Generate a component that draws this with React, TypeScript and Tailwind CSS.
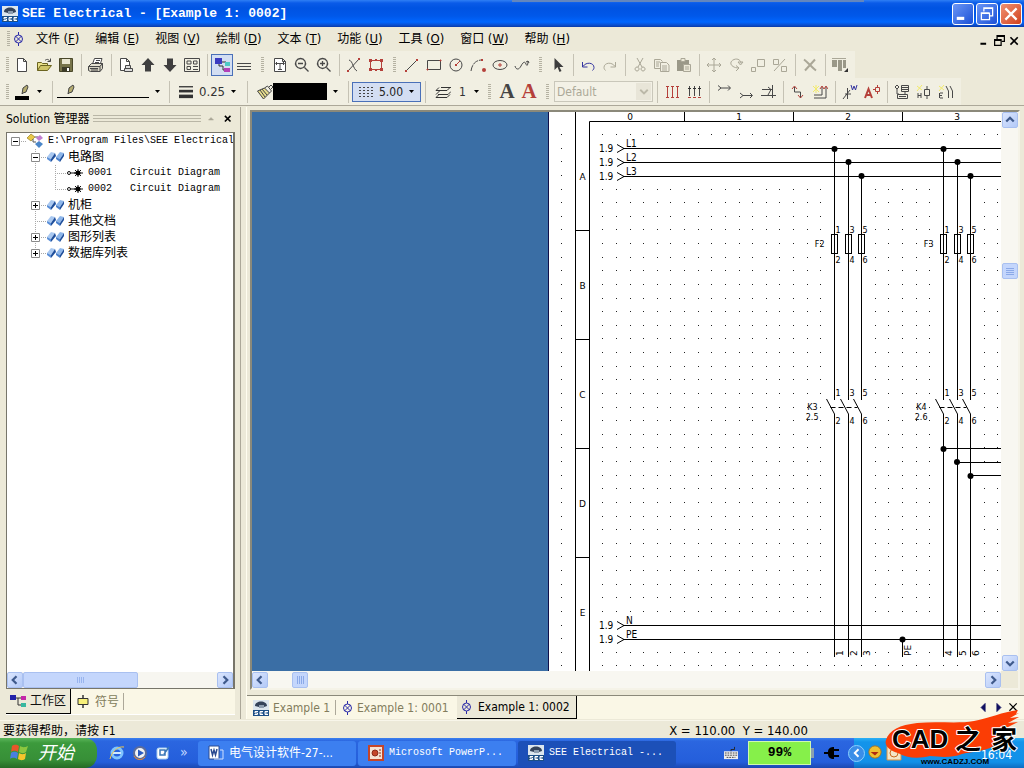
import { useState, type ReactNode } from "react";

const UI = "font-['DejaVu_Sans_Condensed','DejaVu_Sans','Noto_Sans_CJK_SC',sans-serif]";
const MONO = "font-['Liberation_Mono','Noto_Sans_CJK_SC',monospace]";

function Icon({ children, size = 16 }: { children: ReactNode; size?: number }) {
  return (
    <svg width={size} height={size} viewBox="0 0 16 16" fill="none" stroke="currentColor" aria-hidden="true" className="shrink-0">
      {children}
    </svg>
  );
}

const red = "#b5403a";
const yellow = "#f2ea6a";

const icons: Record<string, ReactNode> = {
  New: <path d="M3.5 1.5h6l3 3v10h-9z M9.5 1.5v3h3" fill="#fff" />,
  Open: (
    <>
      <path d="M1.5 13.5v-8h4l1 1h5v2" fill="#e8e08a" stroke="#6b6420" />
      <path d="M1.5 13.5l3-5h11l-4 5z" fill="#cfc568" stroke="#6b6420" />
      <path d="M9 3.5c2-2 4-1 5 1M14.5 1.5v3h-3" />
    </>
  ),
  Save: (
    <>
      <path d="M1.5 1.5h13v13h-13z" fill="#77744a" stroke="#4a482a" />
      <path d="M4 2h8v5H4z" fill="#e9e6d0" stroke="none" />
      <path d="M4 10h8v5H4z" fill="#3d3c28" stroke="none" />
      <path d="M9 11h2v3H9z" fill="#fff" stroke="none" />
    </>
  ),
  Print: (
    <>
      <path d="M4.5 7l2-5.500h7.500l-1.500 5z" fill="#fff" />
      <path d="M8 3.500h4M7 5.500h4" />
      <path d="M.5 9.500l3-3h11l-2.500 3z" fill="#e3e0d0" />
      <path d="M.5 9.500H12v5H2.500l-2-1z M12 9.500l2.500-3v5l-2.500 3" fill="#d6d3c2" />
      <path d="M2 11.500h8M3 13h7" />
    </>
  ),
  "Page setup": (
    <>
      <path d="M6 13.5H2.500v-12h6l3 3v4 M8.500 1.500v3h3" fill="#fff" />
      <path d="M7.500 8.500h5v3h-5z M6.500 11.500h8v3h-8z" fill="#ddd" />
    </>
  ),
  "Previous page": <path d="M8 1L1.500 8H5v6.500h6V8h3.500z" fill="#3f3f3f" stroke="none" />,
  "Next page": <path d="M8 15L1.500 8H5V1.500h6V8h3.500z" fill="#3f3f3f" stroke="none" />,
  "Page list": <path d="M.5 1.500h15v13H.5z M3 4h4v3H3z M9.500 4h3.500v3H9.500z M3 9.500h3.500v3H3z M9 9.500h5 M9 12.500h5" />,
  Workspace: (
    <>
      <path d="M1 1h7v6H1z" fill="#3a3ac0" stroke="none" />
      <path d="M5 7v2h4v4h2M8 5h4" stroke="#333" />
      <path d="M11 5h5v4h-5z" fill="#4cc9c4" stroke="none" />
      <path d="M10 11h6v4h-6z" fill="#b340b8" stroke="none" />
    </>
  ),
  Lines: <path d="M1 6.500h14 M1 9.500h14 M1 12.500h14" />,
  "Fit page": (
    <>
      <path d="M2.500 1.500h8l3 3v10h-11z M10.500 1.500v3h3" fill="#fff" />
      <path d="M4 6.500h8 M8 6.500v6 M5 5l-1.500 1.500L5 8M11 5l1.500 1.500L11 8 M6 12.500h4" />
    </>
  ),
  "Zoom out": <path d="M6.500 1.500a5 5 0 1 0 .1 0z M4 6.500h5 M10.500 10.500l4 4" strokeWidth="1.300" />,
  "Zoom in": <path d="M6.500 1.500a5 5 0 1 0 .1 0z M4 6.500h5 M6.500 4v5 M10.500 10.500l4 4" strokeWidth="1.300" />,
  "Snap line": (
    <>
      <path d="M2 14L13 2 M3 3c4 1 4 9 8 11" />
      <path d="M12 1h2v2h-2z M1 13h2v2H1z" fill={red} stroke="none" />
    </>
  ),
  Select: (
    <>
      <path d="M2.500 3.500h11v9h-11z" stroke={red} />
      <path d="M1 2h3v3H1z M12 2h3v3h-3z M1 11h3v3H1z M12 11h3v3h-3z M7 2h2v2H7z M7 12h2v2H7z" fill={red} stroke="none" />
    </>
  ),
  Line: (
    <>
      <path d="M2 14L13 3" />
      <path d="M12 2h2v2h-2z M1 13h2v2H1z" fill={red} stroke="none" />
    </>
  ),
  Rectangle: (
    <>
      <path d="M1.500 3.500h13v9h-13z" />
      <path d="M14 3h1v1h-1z M1 12h1v1H1z" fill={red} stroke={red} />
    </>
  ),
  Circle: (
    <>
      <circle cx="8" cy="8" r="6" />
      <path d="M8 8l4-4" stroke={red} />
      <path d="M7 7h2v2H7z" fill={red} stroke="none" />
    </>
  ),
  Arc: (
    <>
      <path d="M1 14C2 7 6 3 12 3" strokeDasharray="6 1" />
      <path d="M11 2h2v2h-2z" fill={red} stroke="none" />
      <circle cx="14" cy="13" r="2" fill={red} stroke="none" />
    </>
  ),
  Ellipse: (
    <>
      <ellipse cx="8" cy="8" rx="7" ry="4.500" />
      <path d="M8 6v4M6 8h4" stroke={red} />
    </>
  ),
  Spline: <path d="M1 9c1 4 4 4 6 0s4-5 5-2 2 1 2-3 M12 5l2-1 1 2" />,
  Pointer: <path d="M4.500 1v12l3-3 2 5 2-1-2-4h4z" fill="#3d3d3d" stroke="none" />,
  Undo: <path d="M2.500 5v5h5 M3 9.500c3-5 11-4 11 1 0 1-.5 2-1.500 3" stroke="#3434a0" />,
  Redo: <path d="M13.500 5v5h-5 M13 9.500c-3-5-11-4-11 1 0 1 .5 2 1.500 3" stroke="#aca998" />,
  Cut: <path d="M5 1l5 9 M11 1L6 10 M5 10a2 2 0 1 0 .1 0z M11 10a2 2 0 1 0 .1 0z" />,
  Copy: <path d="M6 11.500H.5v-9h6l2 2 M2 5h4 M2 7h3 M2 9h3 M6.500 5.500h6l2.500 2.500v6.500H6.500z M8 9h5 M8 11h5 M8 13h5" />,
  Paste: (
    <>
      <path d="M1 3h12v11H1z" fill="#9a9888" stroke="none" />
      <path d="M5 1.500h4v3H5z M7.500 7.500h7v7h-7z M9 10h4 M9 12h4" fill="#ece9d8" />
    </>
  ),
  Move: <path d="M8 1v14 M1 8h14 M6 3l2-2 2 2 M6 13l2 2 2-2 M3 6L1 8l2 2 M13 6l2 2-2 2" />,
  Rotate: <path d="M11 11C3 11 0 5 6 2.500c4-1.500 7 1 7 4M10 5h5l-2.500 3z M11 11L8 8.500M11 11l-3 3" />,
  Scale: <path d="M7.500 2.500h7v7h-7z M1.500 10.500h4v4h-4z" />,
  Mirror: <path d="M1.500 2.500h5v5h-5z M9.500 9.500h5v5h-5z M13 2L2 14" />,
  Delete: <path d="M2 2.500c4 3 8 8 12 11 M13 2.500L3 13.500" strokeWidth="2" />,
  Align: (
    <>
      <path d="M0 1.500h14" />
      <path d="M0 3h5v7H0z M6 3h4v11H6z M11 3h3v8h-3z" fill="#9a9888" stroke="none" />
      <path d="M16 11v4h-4z" fill="#333" stroke="none" />
    </>
  ),
  Potential: (
    <>
      <path d="M3.500 3v10 M8.500 3v10 M13.500 3v10" stroke={red} />
      <path d="M2 2.500h3M7 2.500h3M12 2.500h3M2 13.500h3M7 13.500h3M12 13.500h3" stroke={red} />
    </>
  ),
  "Potential multi": (
    <>
      <path d="M3.500 2v10 M8.500 2v10 M13.500 2v10" />
      <path d="M2 4.500h3M7 4.500h3M12 4.500h3" stroke="#333" />
      <path d="M2 13.500h3M7 13.500h3M12 13.500h3" stroke={red} />
    </>
  ),
  "Upper potential": <path d="M2 1.500l3 2.500-3 2.500 M5 4h9 M12 1.500L14.500 4 12 6.500" />,
  "Lower potential": <path d="M2 9l3 2.500L2 14 M5 11.500h9 M12 9l2.500 2.500L12 14" />,
  "Insert potential": <path d="M1 11.500h15 M2 5.500h10 M12.500 1v13 M8 3l3 2.500L8 11" />,
  Connection: (
    <>
      <path d="M4.500 3v5h6v6" />
      <path d="M2 5l2.500-3L7 5M8 11l2.500 3 2.500-3" stroke={red} />
    </>
  ),
  "Auto connection": (
    <>
      <path d="M1 2l6 6M7 2L1 8M4 1v8" stroke={yellow} />
      <path d="M2 11h8V3 M2 14h12V3" />
      <path d="M8 5l2-3 2 3M12 5l2-3 2 3" stroke={red} />
    </>
  ),
  "Wire number": (
    <>
      <path d="M1 15L8 6 M5.500 4v11 M3 10h6" />
      <path d="M9 1l1.500 5L12 2l1.500 4L15 1" stroke="#3434a0" />
    </>
  ),
  "Component text": (
    <>
      <path d="M1 14L4.500 5 8 14 M2.500 11h4" stroke={red} strokeWidth="2" />
      <path d="M9 5.500h2 M11.500 3.500h4v4h-4z M13.500 1v2 M13.500 8v2" stroke={red} />
    </>
  ),
  Catalogue: <path d="M3 1l2 2-2 2-2-2z M3 5v5h2 M7.500 1.500h7v6h-7z M8 3.500h6M8 5.500h6 M3.500 10.500h10v4h-10z M5 12.500h7 M11 8v2" />,
  "Coil search": (
    <>
      <path d="M1 2l5 4M6 1L1 7" stroke={yellow} />
      <path d="M8.500 5.500h5v6h-5z M11 2v3 M11 12v3 M2 9v5 M5 9v5 M2 11.500h3" />
    </>
  ),
  "Contact search": (
    <>
      <path d="M1 2l5 4M6 1L1 7" stroke={yellow} />
      <path d="M8 2l2.500 5v7 M12 2l2.500 5v7 M1.500 9v5 M2 9h3M2 14h3M2 11.500h2" />
    </>
  ),
};

const toolbarGroups: { names: string[]; grip?: boolean; dim?: boolean; plain?: boolean }[] = [
  { names: ["New", "Open", "Save"], plain: true },
  { names: ["Print"] },
  { names: ["Page setup", "Previous page", "Next page", "Page list"] },
  { names: ["Workspace", "Lines"] },
  { names: ["Fit page", "Zoom out", "Zoom in"], grip: true },
  { names: ["Snap line", "Select"] },
  { names: ["Line", "Rectangle", "Circle", "Arc", "Ellipse", "Spline"], grip: true },
  { names: ["Pointer"], grip: true },
  { names: ["Undo", "Redo"] },
  { names: ["Cut", "Copy", "Paste"], dim: true },
  { names: ["Move", "Rotate", "Scale", "Mirror"], dim: true },
  { names: ["Delete"], dim: true },
  { names: ["Align"], dim: true },
];

const wireGroups = [
  ["Potential", "Potential multi"],
  ["Upper potential", "Lower potential", "Insert potential"],
  ["Connection", "Auto connection"],
  ["Wire number", "Component text"],
  ["Catalogue", "Coil search", "Contact search"],
];

function Grip() {
  return (
    <span className="w-3.5 h-4 shrink-0 flex justify-center">
      <span className="w-[3px] h-full bg-[repeating-linear-gradient(#b5b2a2_0_1px,transparent_1px_2px)]" />
    </span>
  );
}

function Sep() {
  return (
    <span className="w-2 h-[22px] shrink-0 flex justify-center">
      <span className="w-px bg-[#c5c2b4]" />
    </span>
  );
}

function ToolButton({ name, dim }: { name: string; dim?: boolean }) {
  const color = dim ? "text-[#aaa797]" : "text-[#484848]";
  const box = name === "Workspace" ? "border border-[#4a70b8] bg-[#d3def2]" : "";
  return (
    <button aria-label={name} className={`w-[22px] h-[22px] shrink-0 flex items-center justify-center ${color} ${box}`}>
      <Icon>{icons[name]}</Icon>
    </button>
  );
}

function Caret() {
  return (
    <svg width="5" height="3" viewBox="0 0 5 3" className="shrink-0" aria-hidden="true">
      <path d="M0 0h5L2.500 3z" />
    </svg>
  );
}

// SEE program logo
function SeeIcon({ size = 16 }: { size?: number }) {
  return (
    <svg width={size} height={size} viewBox="0 0 16 16" aria-hidden="true" className="shrink-0">
      <path d="M0 0h16v16H0z" fill="#dce6ee" />
      <path d="M2 6c0-6 12-6 12 0l-3 1-2-2-3 2z" fill="#34435a" />
      <path d="M6 5h5v3H6z" fill="#8e9eb0" />
      <path d="M0 10h16v6H0z" fill="#1c4f86" />
      <path d="M5 11.500H2v1.500h2.500v1.500H1.500 M10 11.500H7v3h3M7 13h2.500 M15 11.500h-3v3h3M12 13h2.500" fill="none" stroke="#fff" />
    </svg>
  );
}

function SheetIcon() {
  return (
    <svg width="11" height="14" viewBox="0 0 11 14" fill="none" stroke="#2a2aa8" aria-hidden="true" className="shrink-0">
      <circle cx="5.500" cy="7" r="4" />
      <path d="M5.500 0v3 M5.500 11v3 M2.500 4l6 6 M8.500 4l-6 6" />
    </svg>
  );
}

const menus = [
  ["文件", "F"], ["编辑", "E"], ["视图", "V"], ["绘制", "D"], ["文本", "T"],
  ["功能", "U"], ["工具", "O"], ["窗口", "W"], ["帮助", "H"],
];

function TitleBar() {
  return (
    <header className="relative h-[27px] shrink-0 flex items-center pl-0.5 pr-0.5 bg-[linear-gradient(#2f7ff5_0px,#0a5be8_3px,#0053e2_8px,#0058ea_16px,#0066ff_22px,#0a4fd0_25px,#0a3aa8_27px)]">
      <span className="absolute top-0 left-1/2 w-[352px] h-0.5 bg-[#6486bd]" />
      <SeeIcon />
      <h1 className={`ml-1 flex-1 text-[13px] font-bold text-white whitespace-pre ${MONO}`}>SEE Electrical - [Example 1: 0002]</h1>
      <div className="flex gap-0.5">
        <button aria-label="Minimize" className="size-[22px] rounded-[3px] border border-white bg-linear-to-br from-[#6b95f5] to-[#1a4fd6]">
          <Icon size={20}><path d="M3 11.500h6" stroke="#fff" strokeWidth="2.500" /></Icon>
        </button>
        <button aria-label="Restore" className="size-[22px] rounded-[3px] border border-white bg-linear-to-br from-[#6b95f5] to-[#1a4fd6]">
          <Icon size={20}><path d="M5.500 6V3.500h7v6H10 M3 7.500h7v5H3.500v-5 M5 3h8 M3 7h7" stroke="#fff" /></Icon>
        </button>
        <button aria-label="Close" className="size-[22px] rounded-[3px] border border-white bg-linear-to-br from-[#f09070] to-[#d0401a]">
          <Icon size={20}><path d="M3.500 3.500l9 9 M12.500 3.500l-9 9" stroke="#fff" strokeWidth="1.800" /></Icon>
        </button>
      </div>
    </header>
  );
}

function MenuBar() {
  return (
    <nav className="h-6 shrink-0 flex items-center pl-px pr-[3px] text-black">
      <Grip />
      <span className="-ml-0.5 mr-3"><SheetIcon /></span>
      <div className="flex gap-4 flex-1">
        {menus.map(([label, key]) => (
          <button key={key} className="whitespace-nowrap">
            {label} <span className="text-[13px]">(<u>{key}</u>)</span>
          </button>
        ))}
      </div>
      <div className="flex items-center gap-0.5 pt-0.5">
        <button aria-label="Minimize document"><Icon size={13}><path d="M3 12h7" strokeWidth="2.500" /></Icon></button>
        <button aria-label="Restore document"><Icon size={13}><path d="M5 6V2h9v7h-3 M5 3h9 M2 7h8v7H2z M2 8h8" strokeWidth="1.500" /></Icon></button>
        <button aria-label="Close document"><Icon size={13}><path d="M3 4l9 9 M12 4l-9 9" strokeWidth="2" /></Icon></button>
      </div>
    </nav>
  );
}

function Toolbars() {
  return (
    <>
      <div className="h-[27px] shrink-0 flex items-center">
        <div className="flex items-center bg-[#f1efe2] pr-1 h-full">
          <span className="-mr-[3px] flex"><Grip /></span>
          {toolbarGroups.map((g) => (
            <div key={g.names[0]} className="flex items-center">
              {g.plain ? null : g.grip ? <Grip /> : <Sep />}
              {g.names.map((n) => <ToolButton key={n} name={n} dim={g.dim} />)}
            </div>
          ))}
        </div>
      </div>
      <div className="h-[27px] shrink-0 flex items-center">
        <div className="flex items-center bg-[#f1efe2] pr-1 h-full">
          <span className="-mr-[3px] flex"><Grip /></span>
          <button aria-label="Pen colour" className="w-[37px] flex items-center gap-2 pl-1">
            <svg width="14" height="16" viewBox="0 0 14 16" aria-hidden="true">
              <path d="M7 10L8 4l4-3 1 2-2 5-3 1z" fill="#b5ac70" stroke="#444" />
              <path d="M0 12h14v4H0z" />
            </svg>
            <Caret />
          </button>
          <Sep />
          <button aria-label="Line style" className="w-[109px] flex items-center gap-1.5 pl-px">
            <svg width="92" height="16" viewBox="0 0 92 16" aria-hidden="true">
              <path d="M11 10L12 4l4-3 1 2-2 5-3 1z" fill="#b5ac70" stroke="#444" />
              <path d="M0 13.500h92" stroke="#000" />
            </svg>
            <Caret />
          </button>
          <Sep />
          <button className="w-[70px] flex items-center gap-1.5 pl-1.5 text-[13px] text-[#333]">
            <Icon size={14}><path d="M0 2h16" strokeWidth="1.500" /><path d="M0 7h16" strokeWidth="3" /><path d="M0 13h16" strokeWidth="4" /></Icon>
            0.25
            <Caret />
          </button>
          <Sep />
          <button aria-label="Fill" className="w-[93px] flex items-center gap-1.5 pl-1.5 text-[#444]">
            <span className="flex items-center">
              <Icon>
                <path d="M.5 7l7-3 5 5-6 6z" fill="#e6dc8c" />
                <path d="M3 6l5 7M5 5l5 6M7.500 4l3-2 4 5-2 2M12 3l2-2 2 2-2 2" />
              </Icon>
              <span className="w-[54px] h-[17px] bg-black" />
            </span>
            <Caret />
          </button>
          <Sep />
          <button className="w-[69px] h-5 flex items-center gap-1.5 pl-1.5 border border-[#4a70b8] bg-[#d3def2] text-[#222]">
            <svg width="14" height="12" viewBox="0 0 14 12" aria-hidden="true" className="shrink-0">
              <path d="M0 1.500h14M0 4.500h14M0 7.500h14M0 10.500h14" stroke="#444" strokeDasharray="2 2" />
            </svg>
            5.00
            <Caret />
          </button>
          <Sep />
          <button className="w-[53px] flex items-center gap-2 pl-1.5 text-[#333]">
            <Icon><path d="M6 3.500h10M1 6.500h11l3-3M1 6.500l3-3M3 10.500h10l3-3M1 10.500l4-4M1 13.500h11l3-3M1 13.500l3-3" /></Icon>
            1
            <Caret />
          </button>
          <Grip />
          <button aria-label="Text" className="w-[22px] text-[21px] leading-none font-bold text-[#444] font-['Liberation_Serif',serif]">A</button>
          <button aria-label="Text attributes" className="w-[22px] text-[21px] leading-none font-bold text-[#b5403a] font-['Liberation_Serif',serif]">A</button>
          <Grip />
          <span className="relative flex">
            <select disabled aria-label="Style" className="w-[99px] h-[21px] pl-0.5 appearance-none border border-[#c9c7ba] text-[#aca998] bg-[#f3f1e6]">
              <option>Default</option>
            </select>
            <span className="pointer-events-none absolute right-0.5 top-0.5 w-[15px] h-[17px] flex items-center justify-center bg-[#e8e5d8] text-[#bbb8a8]">
              <Icon size={12}><path d="M3 5l5 5 5-5" strokeWidth="2.500" /></Icon>
            </span>
          </span>
          {wireGroups.map((g) => (
            <div key={g[0]} className="flex items-center">
              <Sep />
              {g.map((n) => <ToolButton key={n} name={n} />)}
            </div>
          ))}
        </div>
      </div>
    </>
  );
}

/* ---------- side panel ---------- */

function Guide({ box, up, down, right }: { box?: "+" | "-"; up?: boolean; down?: boolean; right?: boolean }) {
  return (
    <svg width="20" height="16" viewBox="0 0 20 16" fill="none" className="shrink-0" aria-hidden="true">
      <g stroke="#a8a8a8" strokeDasharray="1 1">
        {up && <path d="M8.500 0v8" />}
        {down && <path d="M8.500 8v8" />}
        {right && <path d="M8 8.500h12" />}
      </g>
      {box && <path d="M4.500 4.500h8v8h-8z" fill="#fff" stroke="#8a8a8a" />}
      {box && <path d="M6 8.500h5" stroke="#000" />}
      {box === "+" && <path d="M8.500 6v5" stroke="#000" />}
    </svg>
  );
}

function FolderIcon() {
  return (
    <svg width="17" height="12" viewBox="0 0 17 12" className="shrink-0" aria-hidden="true">
      <path d="M0 6l4-5 4 1-4 6z" fill="#a9c8f0" />
      <path d="M0 6l4 2v3L0 8z" fill="#5a8fd8" />
      <path d="M4 8l4-6 1 3-5 6z" fill="#1f4f9c" />
      <path d="M9 6l4-5 4 1-4 6z" fill="#8db6ea" />
      <path d="M9 6l4 2v3L9 8z" fill="#4a80cc" />
      <path d="M13 8l4-6v3l-4 6z" fill="#1f4f9c" />
    </svg>
  );
}

const folders = [
  { label: "机柜", box: "+" as const },
  { label: "其他文档" },
  { label: "图形列表", box: "+" as const },
  { label: "数据库列表", box: "+" as const },
];

function Tree() {
  return (
    <ul className="flex-1 overflow-hidden text-black">
      <li className="flex items-center h-4">
        <Guide box="-" right />
        <svg width="17" height="16" viewBox="0 0 17 16" className="shrink-0" aria-hidden="true">
          <path d="M0 5l4-4 4 3-4 4z" fill="#e8c94a" stroke="#8a6d10" strokeWidth=".6" />
          <path d="M8 4h3M6 6v3h3" stroke="#555" fill="none" />
          <path d="M9 5l4-3 3 3-4 3z" fill="#c17fd0" />
          <path d="M8 11l4-3 4 3-4 4z" fill="#4a86c8" />
        </svg>
        <span className={`pl-1 text-[10px] whitespace-pre ${MONO}`}>E:\Program Files\SEE Electrical</span>
      </li>
      <li className="flex items-center h-4">
        <Guide /><Guide box="-" up down right /><FolderIcon />
        <span className="pl-1">电路图</span>
      </li>
      {["0001", "0002"].map((n, i) => (
        <li key={n} className="flex items-center h-4">
          <Guide /><Guide up down /><Guide up down={i === 0} right />
          <svg width="16" height="10" viewBox="0 0 16 10" className="shrink-0" aria-hidden="true">
            <path d="M3 5h6 M8 2l6 6 M14 2L8 8 M11 1v8 M7 5h9" stroke="#111" />
            <circle cx="2" cy="5" r="1.500" fill="#fff" stroke="#111" />
            <circle cx="11" cy="5" r="2.500" />
          </svg>
          <span className={`pl-[5px] text-[10px] whitespace-pre ${MONO}`}>{n}   Circuit Diagram</span>
        </li>
      ))}
      {folders.map((f, i) => (
        <li key={f.label} className="flex items-center h-4">
          <Guide /><Guide box={f.box} up down={i < folders.length - 1} right /><FolderIcon />
          <span className="pl-1">{f.label}</span>
        </li>
      ))}
    </ul>
  );
}

const arrows = {
  left: "M10 3L5 8l5 5",
  right: "M6 3l5 5-5 5",
  up: "M3 10l5-5 5 5",
  down: "M3 6l5 5 5-5",
};

function ScrollButton({ dir }: { dir: keyof typeof arrows }) {
  return (
    <button aria-label={`Scroll ${dir}`} className="size-4 shrink-0 flex items-center justify-center rounded-xs border border-[#a9c0f0] bg-linear-to-br from-[#dbe6fe] to-[#b3c9f7] text-[#3f5a8c]">
      <Icon size={12}><path d={arrows[dir]} strokeWidth="3" /></Icon>
    </button>
  );
}

function SidePanel() {
  const [tab, setTab] = useState("work");
  return (
    <aside className="w-[241px] shrink-0 flex flex-col pl-1.5 pr-[5px] border-r border-[#aca899]">
      <div className="h-[25px] shrink-0 flex items-center text-black pb-0.5">
        <h2>Solution 管理器</h2>
        <span className="ml-1 flex-1 h-[7px] bg-[repeating-linear-gradient(#b9b6a6_0_1px,transparent_1px_3px)]" />
        <button aria-label="Pin" className="w-5 flex justify-center text-[#aaa797]">
          <Icon size={8}><path d="M3 10l5-5 5 5z" fill="currentColor" /></Icon>
        </button>
        <button aria-label="Close panel" className="w-3.5 flex justify-center">
          <Icon size={10}><path d="M3 3l9 9M12 3l-9 9" strokeWidth="2.500" /></Icon>
        </button>
      </div>
      <div className="flex-1 min-h-0 flex flex-col bg-white border border-[#77756a] border-r-2">
        <Tree />
        <div className="h-4 flex bg-[#f7f6f0]">
          <ScrollButton dir="left" />
          <span className="w-[115px] flex items-center justify-center rounded-xs border border-[#a9c0f0] bg-[#c4d6fc]">
            <span className="w-[7px] h-1.5 bg-[repeating-linear-gradient(90deg,#98b4ee_0_1px,transparent_1px_2px)]" />
          </span>
          <span className="flex-1" />
          <ScrollButton dir="right" />
        </div>
      </div>
      <div className="h-[26px] shrink-0 flex bg-[#faf7e6] mb-1 border-b border-white">
        <button onClick={() => setTab("work")} aria-pressed={tab === "work"} className="h-[25px] w-[65px] flex items-center gap-1 pl-1 bg-[#ece9d8] border-r border-b border-black whitespace-nowrap">
          <Icon>
            <path d="M0 2h6v5H0z" fill="#2222a8" stroke="none" />
            <path d="M6 5h5M8 5v7h3" stroke="#333" />
            <path d="M11 3h5v4h-5z" fill="#c428a8" stroke="none" />
            <path d="M11 10h5v4h-5z" fill="#38b8a0" stroke="none" />
          </Icon>
          工作区
        </button>
        <button onClick={() => setTab("symbol")} aria-pressed={tab === "symbol"} className="my-1 w-[53px] flex items-center gap-1.5 pl-1.5 text-[#827c5c] border-r border-[#aca899] whitespace-nowrap">
          <svg width="12" height="13" viewBox="0 0 12 13" aria-hidden="true">
            <path d="M6 0v13" stroke="#333" strokeWidth="1.500" />
            <path d="M1 3.500h10v6H1z" fill="#f7f07a" stroke="#333" />
          </svg>
          符号
        </button>
      </div>
    </aside>
  );
}

/* ---------- schematic ---------- */

const STEP = 13.625;
const LEFT = 27.5;
const railRows = [1, 2, 3, 36, 37];

function GridDots() {
  const dots: ReactNode[] = [];
  for (let r = 0; r < 60; r++) {
    const y = Math.round(23 + r * STEP) - 1;
    for (let c = -1; c < 60; c++) {
      // frame columns, rails and wires cover their own dots
      if (c === 0 || c === 1) continue;
      if (c > 1 && railRows.includes(r)) continue;
      if (r > 0 && r < 39 && ((c >= 19 && c <= 21) || (c >= 27 && c <= 29))) continue;
      dots.push(<rect key={`${r}-${c}`} x={Math.round(LEFT + c * STEP - 0.5)} y={y} width="1" height="1" />);
    }
  }
  return <g fill="#222">{dots}</g>;
}

function Pole({ x, from, pins, out }: { x: number; from: number; pins: [string, string]; out: string }) {
  return (
    <g>
      <path d={`M${x} ${from}V288 M${x - 8} 287l8 15V545`} fill="none" stroke="#000" />
      <rect x={x - 3} y="122.500" width="6" height="19" fill="none" stroke="#000" />
      <circle cx={x} cy={from} r="3" />
      <g fontSize="8">
        <text x={x + 1} y="121">{pins[0]}</text>
        <text x={x + 1} y="151">{pins[1]}</text>
        <text x={x + 1} y="284">{pins[0]}</text>
        <text x={x + 1} y="312">{pins[1]}</text>
      </g>
      <text fontSize="9" transform={`translate(${x + 8} 544) rotate(-90)`}>{out}</text>
    </g>
  );
}

function Feeder({ x, fuse, relay, page, outs }: { x: number; fuse: string; relay: string; page: string; outs: string[] }) {
  return (
    <g>
      <Pole x={x} from={37} pins={["1", "2"]} out={outs[0]} />
      <Pole x={x + 14} from={50} pins={["3", "4"]} out={outs[1]} />
      <Pole x={x + 27} from={64} pins={["5", "6"]} out={outs[2]} />
      <path d={`M${x - 4} 295.500h27`} stroke="#000" strokeDasharray="5 3" />
      <g fontSize="8" textAnchor="end">
        <text x={x - 10} y="135">{fuse}</text>
        <text x={x - 17} y="298">{relay}</text>
        <text x={x - 16} y="308">{page}</text>
      </g>
    </g>
  );
}

const rails = [
  { y: 36.5, name: "L1" },
  { y: 50.5, name: "L2" },
  { y: 64.5, name: "L3" },
  { y: 513.5, name: "N" },
  { y: 527.5, name: "PE" },
];

function Schematic() {
  return (
    <svg className="flex-1 h-full min-w-0 bg-white border-l border-[#10104a] font-['DejaVu_Sans',sans-serif]" role="img" aria-label="Circuit Diagram 0002">
      <g transform="translate(-1 0)">
        <GridDots />
        <path d="M27.500 0v2000 M41.500 2000V9.500H2000" fill="none" stroke="#000" />
        {["A", "B", "C", "D", "E"].map((l, i) => (
          <g key={l}>
            <text x="34.500" y={68 + i * 109} fontSize="9" textAnchor="middle">{l}</text>
            {i < 4 && <path d={`M28 ${118.5 + i * 109}h13`} stroke="#000" />}
          </g>
        ))}
        {["0", "1", "2", "3"].map((n, i) => (
          <g key={n}>
            <text x={82 + i * 109} y="8" fontSize="9" textAnchor="middle">{n}</text>
            <path d={`M${136.5 + i * 109} 0v9`} stroke="#000" />
          </g>
        ))}
        {rails.map((r) => (
          <g key={r.name} fontSize="10" className="font-['DejaVu_Sans_Condensed','DejaVu_Sans',sans-serif]">
            <text x="51" y={r.y + 3}>1.9</text>
            <text x="78" y={r.y - 2}>{r.name}</text>
            <path d={`M69 ${r.y - 4}l7 4-7 4 M75 ${r.y}H2000`} fill="none" stroke="#000" />
          </g>
        ))}
        <Feeder x={286.5} fuse="F2" relay="K3" page="2.5" outs={["1", "2", "3"]} />
        <Feeder x={395.5} fuse="F3" relay="K4" page="2.6" outs={["4", "5", "6"]} />
        <path d="M395 336.500h1600 M409 350.500h1600 M422 363.500h1600 M354.500 527v18" stroke="#000" />
        <circle cx="395.500" cy="337" r="3" />
        <circle cx="409" cy="350" r="3" />
        <circle cx="422.500" cy="364" r="3" />
        <circle cx="354.500" cy="527.500" r="3" />
        <text fontSize="9" transform="translate(363 544) rotate(-90)">PE</text>
      </g>
    </svg>
  );
}

function DocumentArea() {
  const tabStyle = "h-[23px] flex items-center gap-1 whitespace-nowrap";
  return (
    <section className="flex-1 min-w-0 flex flex-col ml-[5px] border-l border-[#fffdf0]">
      <div className="flex-1 min-h-0 flex flex-col mt-[3px] ml-[3px] mr-1 mb-[5px] border-2 border-[#8b897a] border-r-[#f5f3e8] border-b-[#f5f3e8]">
        <div className="flex-1 min-h-0 flex">
          <div className="w-[296px] shrink-0 bg-[#3a6ea5]" />
          <Schematic />
          <div className="w-[17px] shrink-0 flex flex-col items-center bg-[#f8f7f1]">
            <ScrollButton dir="up" />
            <span className="h-[135px]" />
            <span className="size-4 flex items-center justify-center rounded-xs border border-[#a9c0f0] bg-[#c4d6fc]">
              <span className="w-2 h-[7px] bg-[repeating-linear-gradient(#8ba9e8_0_1px,transparent_1px_2px)]" />
            </span>
            <span className="flex-1" />
            <ScrollButton dir="down" />
          </div>
        </div>
        <div className="h-[17px] shrink-0 flex items-center bg-[#f8f7f1]">
          <ScrollButton dir="left" />
          <span className="w-6" />
          <span className="size-4 flex items-center justify-center rounded-xs border border-[#a9c0f0] bg-[#c4d6fc]">
            <span className="w-[7px] h-2 bg-[repeating-linear-gradient(90deg,#8ba9e8_0_1px,transparent_1px_2px)]" />
          </span>
          <span className="flex-1" />
          <ScrollButton dir="right" />
          <span className="w-[17px] h-full bg-[#ece9d8]" />
        </div>
      </div>
      <div className="h-6 shrink-0 flex bg-[#faf7e6] border-t border-[#8b897a] pl-1.5 text-[#827c5c]">
        <button className={`${tabStyle} w-[82px]`}><SeeIcon />Example 1</button>
        <span className="my-1 w-px bg-[#aca899]" />
        <button className={`${tabStyle} w-[121px] pl-1.5`}><SheetIcon />Example 1: 0001</button>
        <button className={`${tabStyle} w-[120px] gap-1.5 pl-1 text-black bg-[#ece9d8] border-r border-b border-black`}><SheetIcon />Example 1: 0002</button>
        <span className="flex-1" />
        <div className="flex items-center gap-0.5 pr-1 text-[#101060]">
          <button aria-label="Previous tab"><Icon size={13}><path d="M10 3v10L5 8z" fill="currentColor" /></Icon></button>
          <button aria-label="Next tab"><Icon size={13}><path d="M6 3v10l5-5z" fill="currentColor" /></Icon></button>
          <button aria-label="Close tab" className="text-black"><Icon size={13}><path d="M3 3l9 9M12 3l-9 9" strokeWidth="1.500" /></Icon></button>
        </div>
      </div>
    </section>
  );
}

/* ---------- task bar ---------- */

const taskStyle = "h-[25px] w-[158px] flex items-center gap-[5px] pl-2.5 rounded-[3px] text-white whitespace-pre";

function TaskBar() {
  return (
    <footer className="relative h-[30px] shrink-0 flex items-center bg-[linear-gradient(#3a80f0_0px,#2b66e0_3px,#245edb_24px,#1b48b0_30px)]">
      <button className="h-full w-[97px] flex items-center gap-2 pl-2.5 rounded-r-xl text-white bg-[linear-gradient(#5bb65b_0px,#3c9a3c_5px,#378f37_22px,#256b25_30px)]">
        <svg width="20" height="18" viewBox="0 0 20 18" aria-hidden="true">
          <path d="M2 2c3-2 5-1 7 0L8 8C6 7 4 6 1 8z" fill="#e8562a" />
          <path d="M10 2c2 1 4 2 8 0l-2 6c-3 2-5 1-7 0z" fill="#8cc63f" />
          <path d="M1 9c3-2 5-1 7 0l-1 6c-2-1-4-2-7 0z" fill="#4a7fe0" />
          <path d="M9 9c2 1 4 2 7 0l-1 6c-3 2-5 1-7 0z" fill="#f6c52c" />
        </svg>
        <span className="text-[18px] leading-none italic">开始</span>
      </button>
      <div className="w-[101px] flex items-center pl-3 gap-[7px]">
        <button aria-label="Internet Explorer">
          <Icon><circle cx="8" cy="8" r="5" stroke="#7fc4ff" strokeWidth="3" /><path d="M4 8h8" stroke="#cfe8ff" strokeWidth="2" /><path d="M1 14C3 6 9 1 15 2" stroke="#f2c84a" /></Icon>
        </button>
        <button aria-label="Media player">
          <Icon><circle cx="8" cy="8" r="6" fill="#f4f4f4" stroke="#5c6c9a" strokeWidth="2" /><path d="M6 4.500l6 3.500-6 3.500z" fill="#2a5bc0" stroke="none" /><path d="M2 11c2 4 8 5 11 1" stroke="#e88a3a" /></Icon>
        </button>
        <button aria-label="Show desktop">
          <Icon><rect x="2" y="3" width="11" height="11" rx="2" fill="#fff" stroke="#a8d0f0" /><path d="M5 5h5v5H5z M9 9l5-7" stroke="#3a78b8" strokeWidth="1.500" /></Icon>
        </button>
        <button aria-label="More" className="self-start text-[14px] leading-none text-[#c4d8ff] ml-0.5">»</button>
      </div>
      <div className="flex gap-0.5">
        <button className={`${taskStyle} bg-[#3c7ff0]`}>
          <Icon><path d="M1 1h10v13H1z" fill="#fff" stroke="#2a4a90" /><path d="M3 4l1.500 6L6 5l1.500 5L9 4" stroke="#2a4a90" strokeWidth="1.500" /><path d="M12 5h3v9H6" stroke="#cfe0ff" /></Icon>
          <span>电气设计软件-27-...</span>
        </button>
        <button className={`${taskStyle} ${MONO} text-[10px] bg-[#3c7ff0]`}>
          <Icon><path d="M1 1h14v14H1z" fill="#f6e2d4" stroke="#c4452a" strokeWidth="2" /><circle cx="7" cy="8" r="3" fill="#c4452a" stroke="#8a2a1a" /><path d="M11 5h2M11 8h2M11 11h2" stroke="#8a2a1a" /></Icon>
          Microsoft PowerP...
        </button>
        <button className={`${taskStyle} ${MONO} text-[10px] bg-[#1c50b8]`}>
          <SeeIcon />
          SEE Electrical -...
        </button>
      </div>
      <span className="flex-1" />
      <button aria-label="Keyboard" className="mr-2.5">
        <Icon size={14}><path d="M0 6h16v9H0z" fill="#eee" stroke="none" /><path d="M1 8h14M1 10.500h14M3 13h10" stroke="#333" strokeDasharray="2 1" /><path d="M8 6V4h4V1" stroke="#222" /></Icon>
      </button>
      <span className={`w-[63px] h-6 flex items-center justify-center bg-[#86f04a] border border-[#d0f8b0] text-black text-[13px] font-bold ${MONO}`}>99%</span>
      <span className="w-[3px] h-2.5 bg-[#8aa0b0]" />
      <svg width="17" height="14" viewBox="0 0 17 14" className="ml-2.5 mr-[13px]" aria-hidden="true">
        <path d="M0 6h4c0-4 3-5 6-5v2h5v2h-5v4h5v2h-5v2C6 13 4 11 4 8H0z" />
      </svg>
      <div className="relative h-full w-[170px] flex items-center gap-1 pl-2.5 bg-[linear-gradient(#2bb0f5_0px,#1394ea_4px,#1290e8_24px,#0e6cc0_30px)]">
        <button aria-label="Show hidden icons" className="absolute -left-1.5 size-[17px] rounded-full border border-[#8cd0ff] bg-[#3a8ee8] flex items-center justify-center text-white">
          <Icon size={12}><path d="M10 3L5 8l5 5" strokeWidth="2.500" /></Icon>
        </button>
        <span className="ml-1 flex gap-1">
          <Icon size={14}><circle cx="8" cy="8" r="7" fill="#f0c030" stroke="#b87010" /><path d="M3 8h9l-4 4z" fill="#b02a10" stroke="none" /></Icon>
          <Icon size={16}><path d="M1 1h14v14H1z" fill="#f4e6c8" stroke="#d89040" /><circle cx="8" cy="8" r="4" stroke="#c86a20" /></Icon>
        </span>
        <time className="ml-auto mr-3 self-end pb-[5px] text-white leading-4">16:04</time>
      </div>
      <svg width="142" height="60" viewBox="0 0 142 60" className="absolute right-0 bottom-0 pointer-events-none" role="img" aria-label="CAD之家 www.CADZJ.COM">
        <path d="M4 32C7 22 18 17 35 15C56 13 76 16 92 13C108 10 120 4 136 2L134 6L137 5L128 10L137 9L126 15L136 14L124 20C124 26 120 34 108 40C98 44 88 44 80 46C70 50 58 49 48 48C36 51 24 50 16 45C8 43 2 38 4 32z" fill="#fb3d05" />
        <g stroke="#fff" strokeWidth="2" strokeLinejoin="round" paintOrder="stroke" fontWeight="bold">
          <text x="10" y="40" fontSize="26" className="font-['Liberation_Sans',sans-serif]">CAD</text>
          <text x="73" y="41" fontSize="26" className="font-['Noto_Sans_CJK_SC',sans-serif]">之</text>
          <text x="109" y="41" fontSize="26" className="font-['Noto_Sans_CJK_SC',sans-serif]">家</text>
        </g>
        <text x="39" y="56" fontSize="8" fontWeight="bold" className="font-['Liberation_Sans',sans-serif]">www.CADZJ.COM</text>
      </svg>
    </footer>
  );
}

export default function App() {
  return (
    <div className={`h-screen flex flex-col overflow-hidden bg-[#ece9d8] text-[12px] leading-4 text-[#111] ${UI}`}>
      <TitleBar />
      <MenuBar />
      <Toolbars />
      <main className="flex-1 min-h-0 flex border-t border-[#aca899] pt-px pb-px">
        <SidePanel />
        <DocumentArea />
      </main>
      <div className="h-[18px] shrink-0 flex items-center justify-between pl-[3px] pr-[216px] pt-0.5 border-t border-[#f8f6ea] text-black">
        <span>要获得帮助，请按 F1</span>
        <span className="whitespace-pre text-[13px]">X = 110.00  Y = 140.00</span>
      </div>
      <TaskBar />
    </div>
  );
}
